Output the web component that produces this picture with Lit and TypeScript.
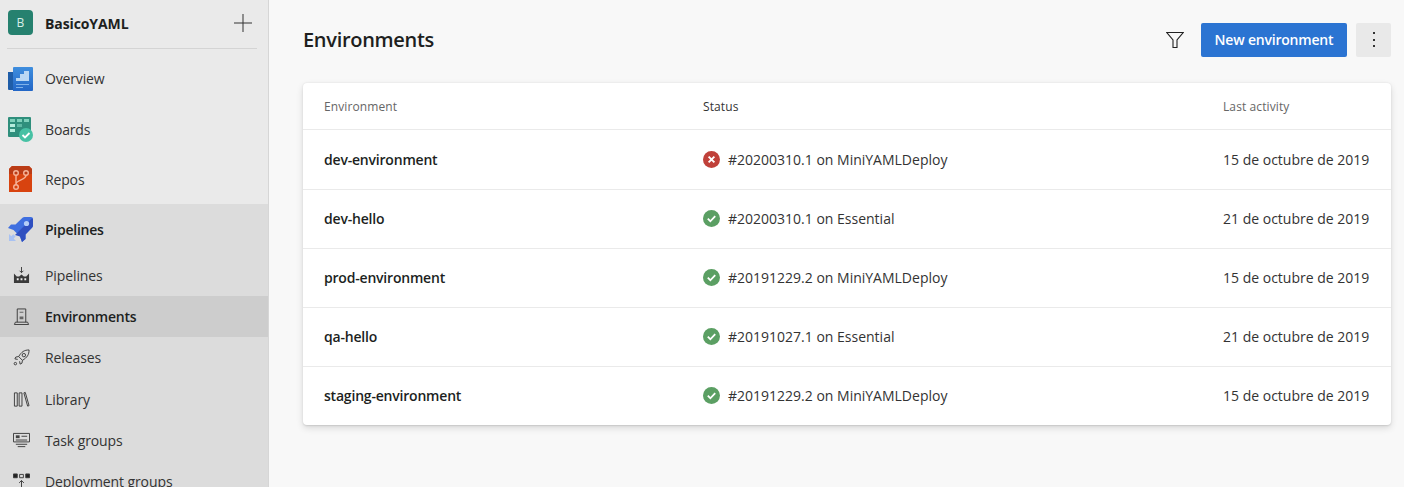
import { LitElement, html, css, svg } from "lit";
import { customElement } from "lit/decorators.js";

const overview = html`<svg viewBox="0 0 25 24" width="25" height="24"><defs><linearGradient id="ov" x1="0" y1="0" x2="0" y2="1"><stop offset="0" stop-color="#3f8ede"/><stop offset="1" stop-color="#2266c6"/></linearGradient></defs><path d="M0 5h5v18H1a1 1 0 0 1-1-1z" fill="#1f5da8"/><path d="M5 1a1 1 0 0 1 1-1h18a1 1 0 0 1 1 1v22a1 1 0 0 1-1 1H5z" fill="url(#ov)"/><path d="M8 14v-3h4V7h4V4h5v10z" fill="#b9d7f4"/><path d="M8 17h13v1H8z" fill="#7fb2ea"/><path d="M8 20h7v1H8z" fill="#7fb2ea"/></svg>`;
const boards = html`<svg viewBox="0 0 25 25" width="25" height="25"><path d="M0 1a1 1 0 0 1 1-1h21a1 1 0 0 1 1 1v18a1 1 0 0 1-1 1H1a1 1 0 0 1-1-1z" fill="#2f8f7c"/><path d="M2 2h5v3H2zM9 2h5v3H9zM16 2h5v3h-5z" fill="#7fd1bb"/><path d="M2 7h5v3H2z" fill="#b5ecdc"/><path d="M9 7h5v3H9z" fill="#5fb9a4"/><path d="M2 12h5v3H2z" fill="#b5ecdc"/><circle cx="18" cy="18" r="7" fill="#47c1a4"/><path d="M14.500 18l2.500 2.500 4.500-4.500" fill="none" stroke="#fff" stroke-width="1.800"/></svg>`;
const repos = html`<svg class="shift" viewBox="0 0 23 26" width="23" height="26"><path d="M3 0h17l3 3v23H0V3z" fill="#d8430f"/><path d="M3 0h17l3 3v5H0V3z" fill="#bb3c16"/><g fill="none" stroke="#f5b49a" stroke-width="1.400"><circle cx="7" cy="7" r="2.300"/><circle cx="17" cy="7" r="2.300"/><circle cx="7" cy="21" r="2.300"/><path d="M7 9.300v9.400M17 9.300c0 5-10 4-10 9"/></g></svg>`;
const pipelinesMain = html`<svg viewBox="0 0 25 25" width="25" height="25"><path d="M25 2a2 2 0 0 0-2-2h-6.500a3 3 0 0 0-2 .8L7.500 7.500H3L0 11l5.500 2 6.500 6.500 2 5.500 3.500-3v-4.500l6.700-7a3 3 0 0 0 .8-2z" fill="#3f6fe0"/><path d="M24 1.200l-17 16.800 5 1.500 2 5.500 3.500-3v-4.500l6.700-7a3 3 0 0 0 .8-2V2z" fill="#2f4fc0"/><circle cx="18.500" cy="6.500" r="2.600" fill="#b4cdf7"/><path d="M1 17v7h7l-2.400-2.400 2-2-2.300-2.300-2 2z" fill="#a9c2f2"/></svg>`;

const strokeIcon = (content: unknown) => html`<svg viewBox="0 0 18 18" width="17" height="17" fill="none" stroke="#3a3a3a" stroke-width="1">${content}</svg>`;
const subPipelines = strokeIcon(svg`<path d="M9 0v6M7 4l2 2 2-2"/><path d="M1 7l3 3h2.500L9 8l2.500 2H14l3-3v10H1z" fill="#3a3a3a" stroke="none"/><path d="M4 12h2v2H4zM8 12h2v2H8zM12 12h2v2h-2z" fill="#eee" stroke="none"/>`);
const subEnv = strokeIcon(svg`<path d="M4.500 15V1h9v14M1.500 17.500l1-2.500h13l1 2.500z"/><path d="M7 4h4v1H7zM7 9h4v3H7z" fill="#666" stroke="none"/>`);
const subRel = strokeIcon(svg`<path d="M17 1c-5 0-8 2-11 7l4 4c5-3 7-6 7-11zM6 8l-3 .5-1 2 3 .5M10 12l-.5 3-2 1-.5-3"/><circle cx="11.500" cy="6.500" r="1.800"/><circle cx="2.500" cy="15.500" r="1.300"/>`);
const subLib = strokeIcon(svg`<path d="M1.500 2h3v14h-3zM6.500 2h3v14h-3zM11.500 2l1.500-.500 4 14-1.500.5z"/>`);
const subTask = strokeIcon(svg`<path d="M.5 1.500h17v9H.5zM3 13h12M5 15.500h8"/><path d="M3 3.500h4v3H3z" fill="#444" stroke="none"/><path d="M9 4.500h6M3 8.500h12"/>`);
const subDeploy = strokeIcon(svg`<path d="M.5 1h4v4h-4zM13.500 1h4v4h-4z" fill="#222"/><path d="M7 1.500h4v3.500H7zM9 17V8M6.500 10.500L9 8l2.500 2.500"/>`);

const primary = [
  { label: "Overview", icon: overview },
  { label: "Boards", icon: boards },
  { label: "Repos", icon: repos },
];
const secondary = [
  { label: "Pipelines", icon: subPipelines, on: false },
  { label: "Environments", icon: subEnv, on: true },
  { label: "Releases", icon: subRel, on: false },
  { label: "Library", icon: subLib, on: false },
  { label: "Task groups", icon: subTask, on: false },
  { label: "Deployment groups", icon: subDeploy, on: false },
];
const rows = [
  { name: "dev-environment", ok: false, run: "#20200310.1 on MiniYAMLDeploy", date: "15 de octubre de 2019" },
  { name: "dev-hello", ok: true, run: "#20200310.1 on Essential", date: "21 de octubre de 2019" },
  { name: "prod-environment", ok: true, run: "#20191229.2 on MiniYAMLDeploy", date: "15 de octubre de 2019" },
  { name: "qa-hello", ok: true, run: "#20191027.1 on Essential", date: "21 de octubre de 2019" },
  { name: "staging-environment", ok: true, run: "#20191229.2 on MiniYAMLDeploy", date: "15 de octubre de 2019" },
];

@customElement("app-root")
export class AppRoot extends LitElement {
  static styles = css`
    :host { display: block; width: 1404px; height: 487px; overflow: hidden; font-family: "Open Sans", "Noto Sans", sans-serif; color: #201f1e; background: #f8f8f8; }
    .page { display: flex; height: 487px; overflow: hidden; }
    .side { width: 268px; flex: none; background: #eaeaea; border-right: 1px solid #d6d6d6; overflow: hidden; }
    .org { height: 45px; padding-bottom: 3px; margin: 0 11px 0 7px; padding-left: 1px; display: flex; align-items: center; border-bottom: 1px solid #d4d4d4; box-sizing: content-box; }
    .avatar { width: 25px; height: 25px; border-radius: 4px; background: #26816f; color: #d8eee8; font-size: 12px; display: flex; align-items: center; justify-content: center; }
    .orgname { margin-left: 12px; padding-top: 2px; font-size: 14px; font-weight: 700; flex: 1; letter-spacing: -0.1px; }
    .plus { display: block; margin-right: 5px; }
    .primary { height: 155px; padding-top: 4.7px; box-sizing: border-box; }
    .nav { height: 50.3px; display: flex; align-items: center; font-size: 14px; letter-spacing: -0.15px; color: #333; }
    .nav .ic { width: 45px; flex: none; display: flex; justify-content: flex-start; padding-left: 8px; box-sizing: border-box; }
    .shift { margin-left: 1px; }
    .group { background: #dcdcdc; height: 283px; }
    .group .head { height: 51px; font-weight: 600; color: #201f1e; letter-spacing: -0.25px; }
    .sub { height: 41px; display: flex; align-items: center; font-size: 14px; letter-spacing: -0.1px; color: #333; }
    .sub.on ~ .sub { height: 41.4px; }
    .sub .ic { width: 45px; flex: none; padding-left: 12.5px; box-sizing: border-box; display: flex; }
    .sub.on { background: #cdcdcd; font-weight: 600; color: #201f1e; letter-spacing: -0.25px; }
    .main { flex: 1; min-width: 0; padding: 0 13px 0 34px; }
    .top { height: 83px; display: flex; align-items: center; padding-bottom: 4px; box-sizing: border-box; }
    h1 { margin: 0; font-size: 20px; font-weight: 600; flex: 1; letter-spacing: -0.3px; line-height: 28px; }
    .filter { display: block; margin-right: 17px; }
    .btn { width: 146px; height: 34px; border: 0; border-radius: 2px; background: #2b74d2; color: #fff; font: 600 14px "Open Sans", sans-serif; letter-spacing: -0.2px; padding: 0; }
    .more { width: 35px; height: 34px; margin-left: 9px; border-radius: 2px; background: #e9e9e9; display: flex; flex-direction: column; align-items: center; justify-content: center; gap: 4.5px; }
    .more i { width: 2px; height: 2px; background: #333; display: block; }
    .card { background: #fff; border-radius: 4px; box-shadow: 0 3px 7px rgba(0,0,0,.13), 0 .6px 1.8px rgba(0,0,0,.11); }
    .row { display: grid; grid-template-columns: 400px 1fr auto; align-items: center; height: 59px; padding: 0 22px 2px 21px; border-top: 1px solid #eaeaea; box-sizing: border-box; font-size: 14px; }
    .row.first { height: 60px; padding-bottom: 1px; }
    .row.hd { height: 46px; padding-top: 1px; padding-bottom: 0; border-top: 0; font-size: 12px; color: #666; letter-spacing: 0.1px; }
    .row.hd .last { width: 146px; }
    .name { font-weight: 600; letter-spacing: -0.2px; }
    .status { display: flex; align-items: center; gap: 8px; color: #333; margin-left: -21px; }
    .date { color: #333; width: 146px; white-space: nowrap; }
    .badge { display: block; flex: none; }
  `;

  private badge(ok: boolean) {
    return ok
      ? html`<svg class="badge" viewBox="0 0 16 16" width="17" height="17"><circle cx="8" cy="8" r="8" fill="#5b9f63"/><path d="M4.500 8.200l2.400 2.400 4.600-4.800" fill="none" stroke="#fff" stroke-width="1.700"/></svg>`
      : html`<svg class="badge" viewBox="0 0 16 16" width="17" height="17"><circle cx="8" cy="8" r="8" fill="#c0413a"/><path d="M5.300 5.300l5.400 5.400M10.700 5.300l-5.400 5.400" fill="none" stroke="#fff" stroke-width="1.800"/></svg>`;
  }

  render() {
    return html`<div class="page">
      <aside class="side">
        <div class="org">
          <div class="avatar">B</div>
          <div class="orgname">BasicoYAML</div>
          <svg class="plus" viewBox="0 0 18 18" width="18" height="18"><path d="M9 0v18M0 9h18" stroke="#333" stroke-width="1"/></svg>
        </div>
        <div class="primary">
          ${primary.map((n) => html`<div class="nav"><span class="ic">${n.icon}</span>${n.label}</div>`)}
        </div>
        <div class="group">
          <div class="nav head"><span class="ic">${pipelinesMain}</span>Pipelines</div>
          ${secondary.map((n) => html`<div class="sub ${n.on ? "on" : ""}"><span class="ic">${n.icon}</span>${n.label}</div>`)}
        </div>
      </aside>
      <main class="main">
        <div class="top">
          <h1>Environments</h1>
          <svg class="filter" viewBox="0 0 18 18" width="18" height="18"><path d="M.8 1.500h16.400L11 9v7.500H7V9z" fill="none" stroke="#222" stroke-width="1.100"/></svg>
          <button class="btn">New environment</button>
          <div class="more"><i></i><i></i><i></i></div>
        </div>
        <section class="card">
          <div class="row hd"><div>Environment</div><div class="status">Status</div><div class="last">Last activity</div></div>
          ${rows.map((r, i) => html`<div class="row ${i === 0 ? "first" : ""}"><div class="name">${r.name}</div><div class="status">${this.badge(r.ok)}${r.run}</div><div class="date">${r.date}</div></div>`)}
        </section>
      </main>
    </div>`;
  }
}
